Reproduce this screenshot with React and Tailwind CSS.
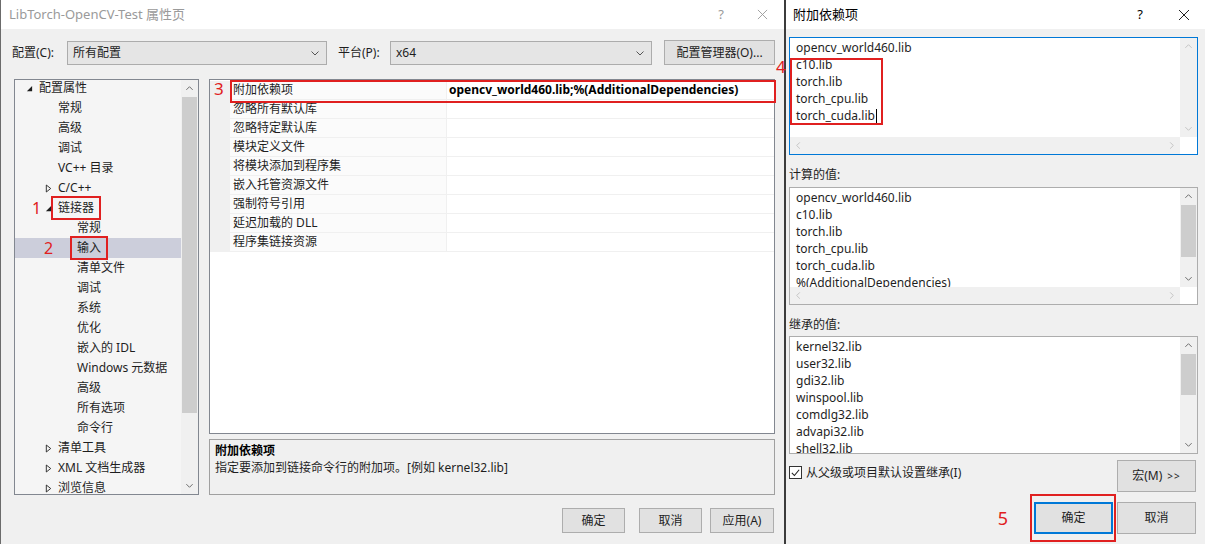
import React from 'react';

// small chevron used for combo boxes and scroll bar arrows
function Chevron({ dir = 'down', className = '' }) {
  const d = {
    down: 'M1.5 3.5l3.5 3.5 3.5-3.5',
    up: 'M1.5 6.5l3.5-3.5 3.5 3.5',
    left: 'M6.5 1.5L3 5l3.5 3.5',
    right: 'M3.5 1.5L7 5l-3.5 3.5',
  }[dir];
  return (
    <svg viewBox="0 0 10 10" className={className} fill="none" stroke="currentColor" strokeWidth="1">
      <path d={d} />
    </svg>
  );
}

function TreeArrow({ open }) {
  if (open) {
    return (
      <svg viewBox="0 0 8 8" className="w-[7px] h-[7px]">
        <path d="M7 1L7 7L1 7Z" fill="#1e1e1e" />
      </svg>
    );
  }
  return (
    <svg viewBox="0 0 8 10" className="w-[7px] h-[9px]">
      <path d="M1.5 1L6.5 5L1.5 9Z" fill="none" stroke="#1e1e1e" strokeWidth="1" />
    </svg>
  );
}

// vertical scroll bar: arrows + optional thumb
function VScroll({ thumbTop = 0, thumbH = 0, dim = false }) {
  const c = dim ? 'text-[#bfbfbf]' : 'text-[#606060]';
  return (
    <div className="w-[17px] flex flex-col bg-[#f0f0f0] shrink-0">
      <div className={`h-[17px] flex items-center justify-center ${c}`}>
        <Chevron dir="up" className="w-[9px] h-[9px]" />
      </div>
      <div className="flex-1 relative">
        {thumbH > 0 && (
          <div className="mx-[1px] bg-[#cdcdcd]" style={{ marginTop: thumbTop, height: thumbH }} />
        )}
      </div>
      <div className={`h-[17px] flex items-center justify-center ${c}`}>
        <Chevron dir="down" className="w-[9px] h-[9px]" />
      </div>
    </div>
  );
}

function HScroll() {
  return (
    <div className="h-[17px] flex items-center justify-between bg-[#f0f0f0] text-[#bfbfbf] px-[4px] mr-[17px]">
      <Chevron dir="left" className="w-[9px] h-[9px]" />
      <Chevron dir="right" className="w-[9px] h-[9px]" />
    </div>
  );
}

const treeItems = [
  { t: '配置属性', lvl: 0, arrow: 'open' },
  { t: '常规', lvl: 1 },
  { t: '高级', lvl: 1 },
  { t: '调试', lvl: 1 },
  { t: 'VC++ 目录', lvl: 1 },
  { t: 'C/C++', lvl: 1, arrow: 'closed' },
  { t: '链接器', lvl: 1, arrow: 'open', mark: '1' },
  { t: '常规', lvl: 2 },
  { t: '输入', lvl: 2, sel: true, mark: '2' },
  { t: '清单文件', lvl: 2 },
  { t: '调试', lvl: 2 },
  { t: '系统', lvl: 2 },
  { t: '优化', lvl: 2 },
  { t: '嵌入的 IDL', lvl: 2 },
  { t: 'Windows 元数据', lvl: 2 },
  { t: '高级', lvl: 2 },
  { t: '所有选项', lvl: 2 },
  { t: '命令行', lvl: 2 },
  { t: '清单工具', lvl: 1, arrow: 'closed' },
  { t: 'XML 文档生成器', lvl: 1, arrow: 'closed' },
  { t: '浏览信息', lvl: 1, arrow: 'closed' },
];

const props = [
  '附加依赖项',
  '忽略所有默认库',
  '忽略特定默认库',
  '模块定义文件',
  '将模块添加到程序集',
  '嵌入托管资源文件',
  '强制符号引用',
  '延迟加载的 DLL',
  '程序集链接资源',
];

const editLines = ['opencv_world460.lib', 'c10.lib', 'torch.lib', 'torch_cpu.lib', 'torch_cuda.lib'];
const computed = [...editLines, '%(AdditionalDependencies)'];
const inherited = ['kernel32.lib', 'user32.lib', 'gdi32.lib', 'winspool.lib', 'comdlg32.lib', 'advapi32.lib', 'shell32.lib'];

const red = 'text-[#e02020]';

function TreeRow({ item }) {
  const pad = 24 + item.lvl * 19;
  return (
    <div className={`h-[20px] flex items-center relative ${item.sel ? 'bg-[#cccedb]' : ''}`} style={{ paddingLeft: pad }}>
      {item.arrow && (
        <span className="absolute flex items-center" style={{ left: pad - 13 }}>
          <TreeArrow open={item.arrow === 'open'} />
        </span>
      )}
      {item.mark === '1' && <span className={`absolute left-[17px] text-[16px] ${red}`}>1</span>}
      {item.mark === '2' && <span className={`absolute left-[29px] text-[16px] ${red}`}>2</span>}
      <span className={item.mark ? 'border-2 border-[#e02020] px-[5px] py-[1px] -ml-[7px] whitespace-nowrap' : 'whitespace-nowrap'}>
        {item.t}
      </span>
    </div>
  );
}

function WinButton({ children, className = '' }) {
  return (
    <button className={`h-[25px] border border-[#adadad] bg-[#e1e1e1] text-[12px] flex items-center justify-center ${className}`}>
      {children}
    </button>
  );
}

export default function App() {
  return (
    <div className="w-[1205px] h-[544px] flex bg-[#f0f0f0] overflow-hidden relative text-[12px] text-[#1e1e1e] font-['Noto_Sans','Noto_Sans_CJK_SC',sans-serif]">
      {/* left: property pages dialog */}
      <div className="w-[784px] shrink-0 flex flex-col border-l border-[#6b6b6b]">
        <div className="h-[29px] bg-white flex items-center pl-[8px] text-[13px] text-[#9a9a9a]">
          <span className="flex-1">LibTorch-OpenCV-Test 属性页</span>
          <span className="w-[20px] text-center mr-[26px]">?</span>
          <svg viewBox="0 0 12 12" className="w-[11px] h-[11px] mr-[16px]" stroke="#9a9a9a" strokeWidth="1">
            <path d="M1 1l10 10M11 1L1 11" />
          </svg>
        </div>

        <div className="flex items-center mt-[11px] h-[25px]">
          <span className="ml-[11px] w-[55px]">配置(C):</span>
          <div className="w-[260px] h-[24px] bg-[#e5e5e5] border border-[#acacac] flex items-center pl-[5px] pr-[6px]">
            <span className="flex-1">所有配置</span>
            <Chevron className="w-[10px] h-[10px] text-[#555]" />
          </div>
          <span className="ml-[11px] w-[52px]">平台(P):</span>
          <div className="w-[262px] h-[24px] bg-[#e5e5e5] border border-[#acacac] flex items-center pl-[5px] pr-[6px]">
            <span className="flex-1">x64</span>
            <Chevron className="w-[10px] h-[10px] text-[#555]" />
          </div>
          <WinButton className="ml-[12px] w-[111px]">配置管理器(O)...</WinButton>
        </div>

        <div className="flex mt-[14px] ml-[13px] h-[416px]">
          {/* tree */}
          <div className="w-[185px] border border-[#828790] bg-[#f5f5f5] flex overflow-hidden">
            <div className="flex-1 -mt-[2px] overflow-hidden">
              {treeItems.map((it, i) => (
                <TreeRow key={i} item={it} />
              ))}
            </div>
            <VScroll thumbTop={0} thumbH={316} />
          </div>

          <div className="ml-[10px] w-[566px] flex flex-col">
            {/* property grid */}
            <div className="h-[357px] border border-[#828790] bg-white relative">
              <div className="flex flex-col pt-[1px]">
                {props.map((p, i) => (
                  <div key={i} className="h-[19px] flex">
                    <div className="w-[20px] bg-[#f0f0f0] shrink-0" />
                    <div className="w-[216px] pl-[3px] flex items-center border-b border-[#f0f0f0] bg-[#fbfbfb]">{p}</div>
                    <div className="flex-1 pl-[2px] flex items-center border-b border-l border-[#f0f0f0] font-bold text-black">
                      {i === 0 ? 'opencv_world460.lib;%(AdditionalDependencies)' : ''}
                    </div>
                  </div>
                ))}
              </div>
              <span className={`absolute left-[4px] top-[-4px] text-[17px] ${red}`}>3</span>
              <div className="absolute left-[20px] top-[0px] w-[546px] h-[23px] border-2 border-[#e02020]" />
            </div>

            {/* description */}
            <div className="mt-[5px] h-[56px] border border-[#a0a0a0] bg-[#f0f0f0] px-[5px] pt-[2px] leading-[17px]">
              <div className="font-bold text-black">附加依赖项</div>
              <div>指定要添加到链接命令行的附加项。[例如 kernel32.lib]</div>
            </div>
          </div>
        </div>

        <div className="flex justify-end mt-[13px] pr-[10px]">
          <WinButton className="w-[63px]">确定</WinButton>
          <WinButton className="w-[63px] ml-[14px]">取消</WinButton>
          <WinButton className="w-[64px] ml-[8px]">应用(A)</WinButton>
        </div>
      </div>

      {/* right: additional dependencies dialog */}
      <div className="flex-1 flex flex-col border-l-2 border-[#3c3c3c]">
        <div className="h-[29px] bg-white flex items-center pl-[7px] text-[13px] text-black shrink-0">
          <span className="flex-1">附加依赖项</span>
          <span className="w-[20px] text-center mr-[28px]">?</span>
          <svg viewBox="0 0 12 12" className="w-[12px] h-[12px] mr-[15px]" stroke="#222" strokeWidth="1">
            <path d="M1 1l10 10M11 1L1 11" />
          </svg>
        </div>

        <div className="pl-[3px] pr-[7px] flex flex-col">
          {/* edit box */}
          <div className="mt-[8px] h-[118px] border border-[#0078d7] bg-white flex flex-col">
            <div className="flex flex-1">
              <div className="flex-1 pl-[6px] pt-[1px] leading-[17px] relative">
                {editLines.map((l, i) => (
                  <div key={i} className="flex items-center">
                    {l}
                    {i === editLines.length - 1 && <span className="w-[1px] h-[14px] bg-black ml-[1px]" />}
                  </div>
                ))}
                <div className="absolute left-[0px] top-[20px] w-[93px] h-[67px] border-2 border-[#e02020]" />
              </div>
              <VScroll dim />
            </div>
            <HScroll />
          </div>

          <div className="mt-[11px] h-[17px] leading-[17px]">计算的值:</div>
          <div className="mt-[4px] h-[118px] border border-[#adadad] bg-white flex flex-col">
            <div className="flex flex-1 overflow-hidden">
              <div className="flex-1 pl-[6px] pt-[1px] leading-[17px] overflow-hidden">
                {computed.map((l, i) => (
                  <div key={i}>{l}</div>
                ))}
              </div>
              <VScroll thumbTop={0} thumbH={52} />
            </div>
            <HScroll />
          </div>

          <div className="mt-[11px] h-[17px] leading-[17px]">继承的值:</div>
          <div className="mt-[3px] h-[118px] border border-[#adadad] bg-white flex overflow-hidden">
            <div className="flex-1 pl-[6px] pt-[1px] leading-[17px] overflow-hidden">
              {inherited.map((l, i) => (
                <div key={i}>{l}</div>
              ))}
            </div>
            <VScroll thumbTop={0} thumbH={41} />
          </div>

          <div className="flex mt-[6px]">
            <div className="flex-1 flex items-start pt-[4px]">
              <span className="w-[13px] h-[13px] border border-[#333] bg-white flex items-center justify-center mt-[2px]">
                <svg viewBox="0 0 12 12" className="w-[11px] h-[11px]" fill="none" stroke="#222" strokeWidth="1.2">
                  <path d="M2 6.5l2.8 2.8L10 3" />
                </svg>
              </span>
              <span className="ml-[4px]">从父级或项目默认设置继承(I)</span>
            </div>
            <button className="w-[79px] h-[32px] border border-[#adadad] bg-[#e1e1e1] flex items-center justify-center mr-[2px]">
              宏(M) <span className="ml-[5px] text-[10px] tracking-[1px]">&gt;&gt;</span>
            </button>
          </div>

          <div className="flex justify-end items-center mt-[10px] mr-[2px] relative">
            <span className={`text-[18px] mr-[26px] ${red}`}>5</span>
            <button className="w-[79px] h-[32px] border-2 border-[#0078d7] bg-[#e1e1e1] flex items-center justify-center">确定</button>
            <button className="w-[79px] h-[32px] border border-[#adadad] bg-[#e1e1e1] flex items-center justify-center ml-[4px]">取消</button>
            <div className="absolute right-[80px] top-[-8px] w-[86px] h-[48px] border-2 border-[#e02020]" />
          </div>
        </div>
      </div>

      {/* stray annotation number over the dialog boundary */}
      <span className={`absolute left-[776px] top-[54px] text-[17px] ${red}`}>4</span>
    </div>
  );
}
